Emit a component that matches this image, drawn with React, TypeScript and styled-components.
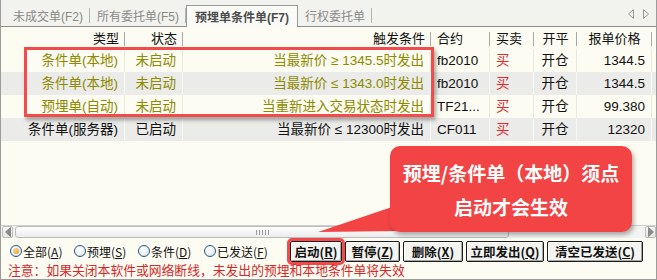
import React from "react";
import styled, { createGlobalStyle, css } from "styled-components";

const FONT = `"Noto Sans CJK SC", "Noto Sans", sans-serif`;
const GRID_FONT = `"Liberation Sans", "Noto Sans CJK SC", sans-serif`;

const GlobalStyle = createGlobalStyle`
  html, body {
    margin: 0;
    padding: 0;
    background: #ffffff;
  }
  body {
    font-family: ${FONT};
  }
`;

type Align = "left" | "right" | "center";

const columns: { title: string; width: number; head: Align; cell: Align }[] = [
  { title: "类型", width: 124, head: "right", cell: "right" },
  { title: "状态", width: 58, head: "right", cell: "right" },
  { title: "触发条件", width: 248, head: "right", cell: "right" },
  { title: "合约", width: 59, head: "left", cell: "left" },
  { title: "买卖", width: 44, head: "left", cell: "left" },
  { title: "开平", width: 43, head: "center", cell: "center" },
  { title: "报单价格", width: 75, head: "center", cell: "right" },
];

const gridCols = columns.map((c) => `${c.width}px`).join(" ");

const rows = [
  { type: "条件单(本地)", status: "未启动", cond: "当最新价 ≥ 1345.5时发出", code: "fb2010", side: "买", offset: "开仓", price: "1344.5", local: true },
  { type: "条件单(本地)", status: "未启动", cond: "当最新价 ≤ 1343.0时发出", code: "fb2010", side: "买", offset: "开仓", price: "1344.5", local: true },
  { type: "预埋单(自动)", status: "未启动", cond: "当重新进入交易状态时发出", code: "TF21...", side: "买", offset: "开仓", price: "99.380", local: true },
  { type: "条件单(服务器)", status: "已启动", cond: "当最新价 ≤ 12300时发出", code: "CF011", side: "买", offset: "开仓", price: "12320", local: false },
];

const tabs = [
  { label: "未成交单(F2)" },
  { label: "所有委托单(F5)" },
  { label: "预埋单条件单(F7)", active: true },
  { label: "行权委托单" },
];

const radios = [
  { label: "全部", key: "A", checked: true },
  { label: "预埋", key: "S" },
  { label: "条件", key: "D" },
  { label: "已发送", key: "F" },
];

const buttons = [
  { label: "启动", key: "R", w: 52, highlight: true },
  { label: "暂停", key: "Z", w: 55 },
  { label: "删除", key: "X", w: 60 },
  { label: "立即发出", key: "Q", w: 78 },
  { label: "清空已发送", key: "C", w: 96 },
];

const Window = styled.div`
  position: relative;
  width: 657px;
  height: 280px;
  box-sizing: border-box;
  border: 1px solid #9c9c9c;
  border-top: none;
  background: #fcfcf2;
  display: flex;
  flex-direction: column;
  overflow: hidden;
  font-family: ${FONT};
`;

const TabBar = styled.div`
  display: flex;
  align-items: flex-end;
  height: 27px;
  flex-shrink: 0;
  box-sizing: border-box;
  padding-left: 5px;
  background: #f2f2ee;
  border-bottom: 1px solid #8e8e8e;
`;

const Tab = styled.div<{ $active?: boolean }>`
  position: relative;
  display: flex;
  align-items: center;
  height: 22px;
  box-sizing: border-box;
  padding: 0 7px;
  font-family: ${GRID_FONT};
  font-size: 12px;
  color: #8a8a8a;
  white-space: nowrap;

  &::after {
    content: "";
    position: absolute;
    right: 0;
    top: 4px;
    bottom: 3px;
    width: 1px;
    background: #b4b4b4;
  }

  ${(p) =>
    p.$active &&
    css`
      margin-bottom: -1px;
      padding: 0 8px 1px;
      background: #fafaf6;
      border: 1px solid #9a9a9a;
      border-bottom: none;
      color: #4c4c4c;
      font-weight: 700;
      &::after {
        display: none;
      }
    `}
`;

const TabArrows = styled.div`
  display: flex;
  gap: 9px;
  margin-left: auto;
  margin-right: 7px;
  align-self: center;
  padding-top: 2px;
`;

const Table = styled.div`
  flex: 1;
  display: flex;
  flex-direction: column;
  font-family: ${GRID_FONT};
`;

const HeaderRow = styled.div`
  display: grid;
  grid-template-columns: ${gridCols};
  height: 22px;
`;

const HeaderCell = styled.div<{ $align: Align }>`
  position: relative;
  box-sizing: border-box;
  padding: 2px 6px 0;
  font-size: 13px;
  line-height: 20px;
  color: #111111;
  text-align: ${(p) => p.$align};
  white-space: nowrap;

  &::after {
    content: "";
    position: absolute;
    right: 0;
    top: 5px;
    bottom: 3px;
    width: 1px;
    background: #a8a8a8;
  }
`;

const toneColor = {
  olive: "#8d8a00",
  red: "#e02a2a",
  plain: "#111111",
};

const Cell = styled.div<{ $align: Align; $tone: keyof typeof toneColor }>`
  box-sizing: border-box;
  padding: 1px 6px 0;
  font-size: 13.5px;
  line-height: 22px;
  color: ${(p) => toneColor[p.$tone]};
  text-align: ${(p) => p.$align};
  white-space: nowrap;
  overflow: hidden;
`;

const Row = styled.div<{ $alt: boolean }>`
  display: grid;
  grid-template-columns: ${gridCols};
  height: 23px;
  background: ${(p) => (p.$alt ? "#ebebe9" : "#fcfcf2")};

  ${Cell} {
    border-right: 1px solid ${(p) => (p.$alt ? "#f8f8f6" : "#e9e9df")};
  }
`;

const HScroll = styled.div`
  display: flex;
  gap: 1px;
  height: 13px;
  flex-shrink: 0;
  box-sizing: border-box;
  padding-left: 1px;
  background: #f3f3f1;
  border-top: 1px solid #cfcfcf;
`;

const ScrollBtn = styled.div`
  width: 11px;
  box-sizing: border-box;
  border: 1px solid #bdbdbd;
  border-radius: 2px;
  background: linear-gradient(#fbfbfb, #e4e4e4);
  display: flex;
  align-items: center;
  justify-content: center;
`;

const Track = styled.div`
  flex: 1;
  display: flex;
  padding-left: 1px;
`;

const Thumb = styled.div`
  width: 494px;
  box-sizing: border-box;
  border: 1px solid #bcbcbc;
  border-radius: 3px;
  background: linear-gradient(#ffffff, #ececec);
  display: flex;
  align-items: center;
  justify-content: center;
`;

const Grip = styled.span`
  width: 13px;
  height: 5px;
  background: repeating-linear-gradient(90deg, #9a9a9a 0 1px, transparent 1px 3px);
`;

const Footer = styled.div`
  height: 41px;
  flex-shrink: 0;
  box-sizing: border-box;
  padding-top: 2px;
  display: flex;
  flex-direction: column;
`;

const Controls = styled.div`
  display: flex;
  align-items: center;
  height: 22px;
  padding-left: 9px;
`;

const RadioGroup = styled.div`
  display: grid;
  grid-template-columns: 64px 64px 66px 1fr;
  width: 280px;
`;

const RadioItem = styled.label`
  display: flex;
  align-items: center;
  gap: 1px;
  font-size: 12px;
  color: #111111;
  white-space: nowrap;
`;

const RadioDot = styled.span<{ $checked?: boolean }>`
  width: 12px;
  height: 12px;
  box-sizing: border-box;
  border-radius: 50%;
  border: 1px solid #23578b;
  background: radial-gradient(circle at 40% 35%, #ffffff, #d9e0e8);
  display: flex;
  align-items: center;
  justify-content: center;

  &::after {
    content: "";
    width: 6px;
    height: 6px;
    border-radius: 50%;
    background: ${(p) =>
      p.$checked ? "radial-gradient(circle at 35% 35%, #ffd88c, #e2961f)" : "transparent"};
  }
`;

const Key = styled.span`
  text-decoration: underline;
`;

const ButtonGroup = styled.div`
  display: flex;
  gap: 3px;
`;

const Button = styled.button<{ $w: number; $highlight?: boolean }>`
  width: ${(p) => p.$w}px;
  height: 21px;
  padding: 0;
  box-sizing: border-box;
  border: 1px solid #1c1c1c;
  border-radius: 2px;
  background: #f3f3f0;
  box-shadow: inset 1px 1px 0 #ffffff, inset -1px -1px 0 #a8a8a8;
  font-family: ${FONT};
  font-size: 12.5px;
  font-weight: 700;
  color: #111111;
  white-space: nowrap;

  ${(p) =>
    p.$highlight &&
    css`
      outline: 3px solid #f14b4b;
      outline-offset: 0;
    `}
`;

const Notice = styled.div`
  height: 16px;
  padding-left: 7px;
  font-size: 12.8px;
  line-height: 16px;
  color: #d42a2a;
  white-space: nowrap;
`;

const Highlight = styled.div`
  position: absolute;
  left: 23px;
  top: 47px;
  width: 410px;
  height: 70px;
  box-sizing: border-box;
  border: 3px solid #f14b4b;
  box-shadow: 2px 3px 4px rgba(0, 0, 0, 0.35);
  pointer-events: none;
`;

const CalloutTail = styled.svg`
  position: absolute;
  left: 315px;
  top: 205px;
  overflow: visible;
`;

const Callout = styled.div`
  position: absolute;
  left: 389px;
  top: 146px;
  width: 242px;
  height: 86px;
  box-sizing: border-box;
  padding-top: 10px;
  border-radius: 10px;
  background: #f24444;
  box-shadow: 2px 3px 4px rgba(0, 0, 0, 0.3);
  color: #ffffff;
  font-size: 19px;
  font-weight: 700;
  line-height: 34px;
  text-align: center;
  white-space: nowrap;
`;

const Triangle = ({ dir, color = "#9a9a9a", filled = false }: { dir: "left" | "right"; color?: string; filled?: boolean }) => (
  <svg width="6" height="10" viewBox="0 0 6 10">
    <polygon
      points={dir === "left" ? "5.5,0.5 0.5,5 5.5,9.5" : "0.5,0.5 5.5,5 0.5,9.5"}
      fill={filled ? color : "none"}
      stroke={color}
      strokeWidth="1"
    />
  </svg>
);

export default function App() {
  return (
    <>
      <GlobalStyle />
      <Window>
        <TabBar>
          {tabs.map((t) => (
            <Tab key={t.label} $active={t.active}>
              {t.label}
            </Tab>
          ))}
          <TabArrows>
            <Triangle dir="left" />
            <Triangle dir="right" />
          </TabArrows>
        </TabBar>

        <Table>
          <HeaderRow>
            {columns.map((c) => (
              <HeaderCell key={c.title} $align={c.head}>
                {c.title}
              </HeaderCell>
            ))}
          </HeaderRow>
          {rows.map((r, i) => {
            const tone = r.local ? "olive" : "plain";
            return (
              <Row key={i} $alt={i % 2 === 1}>
                <Cell $align="right" $tone={tone}>{r.type}</Cell>
                <Cell $align="right" $tone={tone}>{r.status}</Cell>
                <Cell $align="right" $tone={tone}>{r.cond}</Cell>
                <Cell $align="left" $tone="plain">{r.code}</Cell>
                <Cell $align="left" $tone="red">{r.side}</Cell>
                <Cell $align="center" $tone="plain">{r.offset}</Cell>
                <Cell $align="right" $tone="plain">{r.price}</Cell>
              </Row>
            );
          })}
        </Table>

        <HScroll>
          <ScrollBtn>
            <Triangle dir="left" color="#8a8a8a" filled />
          </ScrollBtn>
          <Track>
            <Thumb>
              <Grip />
            </Thumb>
          </Track>
          <ScrollBtn>
            <Triangle dir="right" color="#8a8a8a" filled />
          </ScrollBtn>
        </HScroll>

        <Footer>
          <Controls>
            <RadioGroup>
              {radios.map((r) => (
                <RadioItem key={r.key}>
                  <RadioDot $checked={r.checked} />
                  <span>
                    {r.label}(<Key>{r.key}</Key>)
                  </span>
                </RadioItem>
              ))}
            </RadioGroup>
            <ButtonGroup>
              {buttons.map((b) => (
                <Button key={b.key} $w={b.w} $highlight={b.highlight}>
                  {b.label}(<Key>{b.key}</Key>)
                </Button>
              ))}
            </ButtonGroup>
          </Controls>
          <Notice>注意：如果关闭本软件或网络断线，未发出的预埋和本地条件单将失效</Notice>
        </Footer>

        <Highlight />
        <CalloutTail width="86" height="28">
          <polygon points="76,2 2,27 86,26" fill="#f24444" />
        </CalloutTail>
        <Callout>
          预埋/条件单（本地）须点
          <br />
          启动才会生效
        </Callout>
      </Window>
    </>
  );
}
